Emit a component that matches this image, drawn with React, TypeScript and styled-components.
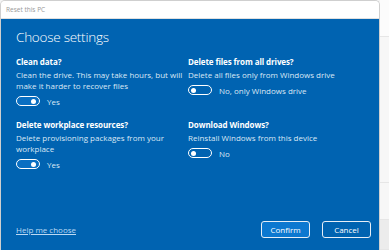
import React from "react";
import styled, { createGlobalStyle } from "styled-components";

const Global = createGlobalStyle`
  html, body { margin: 0; padding: 0; }
  body {
    width: 389px;
    height: 250px;
    overflow: hidden;
    background: #f4f4f4;
    font-family: "Open Sans", "Noto Sans", sans-serif;
  }
`;

const Page = styled.div`
  display: flex;
  width: 389px;
  height: 250px;
  overflow: hidden;
`;

const Window = styled.div`
  width: 378px;
  flex: none;
  display: flex;
  flex-direction: column;
  border: 1px solid #cfcfcf;
  border-bottom: none;
  border-radius: 5px 5px 0 0;
  overflow: hidden;
  height: 260px;
`;

const TitleBar = styled.div`
  height: 17px;
  flex: none;
  background: #ffffff;
  border-bottom: 1px solid #e0e0e0;
  display: flex;
  align-items: center;
  padding-left: 5px;
  font-size: 6.5px;
  color: #9a9a9a;
`;

const Content = styled.div`
  flex: 1;
  background: #0063b1;
  padding: 8px 8px 0 15px;
  display: flex;
  flex-direction: column;
  color: #ffffff;
`;

const Heading = styled.h1`
  margin: 0;
  font-size: 13.5px;
  font-weight: 300;
  line-height: 20px;
  letter-spacing: -0.25px;
`;

const Grid = styled.div`
  display: grid;
  grid-template-columns: 172px 1fr;
  column-gap: 0;
  row-gap: 12px;
  margin-top: 9px;
`;

const Section = styled.div`
  display: flex;
  flex-direction: column;
`;

const SectionTitle = styled.div`
  font-size: 8px;
  font-weight: 700;
  line-height: 11px;
  letter-spacing: -0.1px;
`;

const Desc = styled.div`
  font-size: 8px;
  line-height: 11px;
  color: #dbe8f5;
  margin-top: 2px;
  letter-spacing: 0;
  white-space: nowrap;
`;

const ToggleRow = styled.div`
  display: flex;
  align-items: center;
  gap: 7px;
  margin-top: 4px;
  height: 12px;
`;

const Track = styled.span<{ $on: boolean }>`
  position: relative;
  box-sizing: border-box;
  width: 24px;
  height: 10px;
  border: 1.3px solid #ffffff;
  border-radius: 5px;
  background: ${(p) => (p.$on ? "#0a6fc2" : "transparent")};
`;

const Knob = styled.span<{ $on: boolean }>`
  position: absolute;
  top: 50%;
  left: ${(p) => (p.$on ? "14px" : "2px")};
  width: 5px;
  height: 5px;
  margin-top: -2.5px;
  border-radius: 50%;
  background: #ffffff;
`;

const ToggleLabel = styled.span`
  font-size: 8px;
  color: #dbe8f5;
`;

const Footer = styled.div`
  margin-top: auto;
  margin-bottom: 23px;
  display: flex;
  align-items: center;
  justify-content: space-between;
`;

const Link = styled.a`
  font-size: 8px;
  color: #bcd9f3;
  text-decoration: underline;
`;

const Buttons = styled.div`
  display: flex;
  gap: 12px;
`;

const Button = styled.button<{ $primary?: boolean }>`
  width: 49px;
  height: 17px;
  box-sizing: border-box;
  border: 1px solid #e6eef7;
  border-radius: 3px;
  background: ${(p) => (p.$primary ? "#0c78d0" : "#0063b1")};
  color: #ffffff;
  font-family: inherit;
  font-size: 8px;
  padding: 0;
`;

const Backdrop = styled.div`
  flex: 1;
  display: flex;
  flex-direction: column;
  background: #f6f6f6;
`;

const BackBand = styled.div<{ $h: number; $bg: string }>`
  height: ${(p) => p.$h}px;
  background: ${(p) => p.$bg};
  border-bottom: 1px solid #e6e6e6;
`;

function Toggle({ on, label }: { on: boolean; label: string }) {
  return (
    <ToggleRow>
      <Track $on={on}>
        <Knob $on={on} />
      </Track>
      <ToggleLabel>{label}</ToggleLabel>
    </ToggleRow>
  );
}

export default function App() {
  return (
    <Page>
      <Global />
      <Window>
        <TitleBar>Reset this PC</TitleBar>
        <Content>
          <Heading>Choose settings</Heading>
          <Grid>
            <Section>
              <SectionTitle>Clean data?</SectionTitle>
              <Desc>
                Clean the drive. This may take hours, but will
                <br />
                make it harder to recover files
              </Desc>
              <Toggle on label="Yes" />
            </Section>
            <Section>
              <SectionTitle>Delete files from all drives?</SectionTitle>
              <Desc>Delete all files only from Windows drive</Desc>
              <Toggle on={false} label="No, only Windows drive" />
            </Section>
            <Section>
              <SectionTitle>Delete workplace resources?</SectionTitle>
              <Desc>
                Delete provisioning packages from your
                <br />
                workplace
              </Desc>
              <Toggle on label="Yes" />
            </Section>
            <Section>
              <SectionTitle>Download Windows?</SectionTitle>
              <Desc>Reinstall Windows from this device</Desc>
              <Toggle on={false} label="No" />
            </Section>
          </Grid>
          <Footer>
            <Link href="#">Help me choose</Link>
            <Buttons>
              <Button $primary>Confirm</Button>
              <Button>Cancel</Button>
            </Buttons>
          </Footer>
        </Content>
      </Window>
      <Backdrop>
        <BackBand $h={37} $bg="#fcfcfc" />
        <BackBand $h={149} $bg="#f7f7f7" />
        <BackBand $h={37} $bg="#f7f7f7" />
        <BackBand $h={30} $bg="#ececec" />
      </Backdrop>
    </Page>
  );
}
